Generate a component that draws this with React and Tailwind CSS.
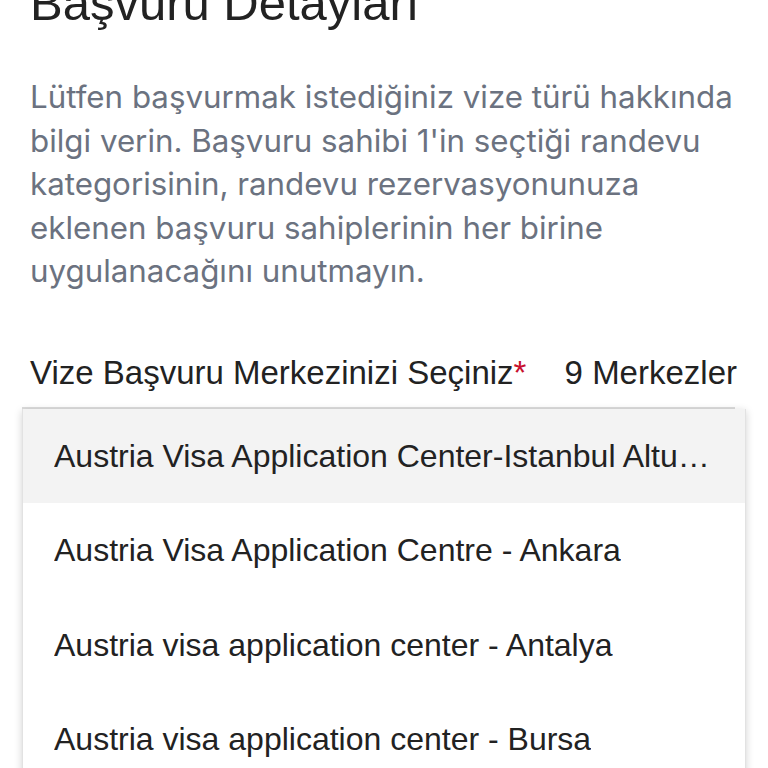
import { useState } from "react";

const centers = [
  "Austria Visa Application Center-Istanbul Altunizade",
  "Austria Visa Application Centre - Ankara",
  "Austria visa application center - Antalya",
  "Austria visa application center - Bursa",
  "Austria visa application center - Gaziantep",
];

export default function App() {
  const [active] = useState(0);

  return (
    <div className="h-[768px] overflow-hidden bg-white">
      <div className="px-[30px]">
        <h1 className="-mt-[25px] font-['Liberation_Sans',Arial,sans-serif] text-[49px] leading-[56px] text-[#222]">
          Başvuru Detayları
        </h1>
        <p className="mt-[45px] font-['Inter',sans-serif] text-[31.3px] leading-[43.5px] text-[#6b7280]">
          Lütfen başvurmak istediğiniz vize türü hakkında
          <br />
          bilgi verin. Başvuru sahibi 1'in seçtiği randevu
          <br />
          kategorisinin, randevu rezervasyonunuza
          <br />
          eklenen başvuru sahiplerinin her birine
          <br />
          uygulanacağını unutmayın.
        </p>
        <div className="mt-[60px] flex items-baseline justify-between pr-[1px] font-['Liberation_Sans',Arial,sans-serif] text-[33px] leading-[38px] text-[#222]">
          <span>
            Vize Başvuru Merkezinizi Seçiniz<span className="text-[#c8102e]">*</span>
          </span>
          <span>9 Merkezler</span>
        </div>
      </div>

      <div className="mx-[22px] mt-[15px]">
        <div className="mr-[11px] h-[2px] bg-[#dcdcdc]" />
        <div className="border-x border-[#e2e2e2] bg-white shadow-[0_2px_8px_rgba(0,0,0,0.18)]">
          {centers.map((c, i) => (
            <div
              key={c}
              className={`flex h-[94.5px] items-center px-[31px] font-['Liberation_Sans',Arial,sans-serif] text-[32px] text-[#222] ${
                i === active ? "bg-[#f3f3f3]" : "bg-white"
              }`}
            >
              <span className="truncate">{c}</span>
            </div>
          ))}
        </div>
      </div>
    </div>
  );
}
